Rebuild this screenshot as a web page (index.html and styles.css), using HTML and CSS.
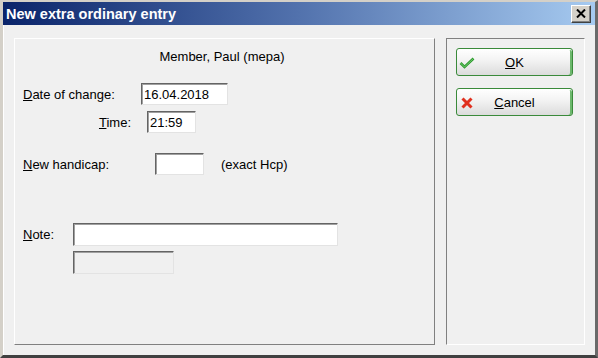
FILE: index.html
```html
<!DOCTYPE html>
<html lang="en">
<head>
    <meta charset="UTF-8">
    <title>New extra ordinary entry</title>
    <link rel="stylesheet" href="styles.css">
</head>
<body>
    <div class="window">
        <div class="titlebar">
            <span class="title">New extra ordinary entry</span>
            <button class="close-btn" aria-label="Close">
                <svg width="10" height="9" viewBox="0 0 10 9">
                    <path d="M1 0.5 L9 8.5 M9 0.5 L1 8.5" stroke="#000" stroke-width="2" fill="none"/>
                </svg>
            </button>
        </div>
        <div class="content">
            <div class="panel main-panel">
                <div class="member">Member, Paul (mepa)</div>

                <div class="row date-row">
                    <label class="lbl lbl-date"><u>D</u>ate of change:</label>
                    <input class="field field-date" type="text" value="16.04.2018">
                </div>
                <div class="row time-row">
                    <label class="lbl lbl-time"><u>T</u>ime:</label>
                    <input class="field field-time" type="text" value="21:59">
                </div>
                <div class="row hcp-row">
                    <label class="lbl lbl-hcp"><u>N</u>ew handicap:</label>
                    <input class="field field-hcp" type="text" value="">
                    <span class="hint">(exact Hcp)</span>
                </div>
                <div class="row note-row">
                    <label class="lbl lbl-note"><u>N</u>ote:</label>
                    <input class="field field-note" type="text" value="">
                </div>
                <div class="row extra-row">
                    <div class="field field-disabled"></div>
                </div>
            </div>
            <div class="panel side-panel">
                <button class="btn">
                    <svg class="btn-icon" width="16" height="12" viewBox="0 0 16 12">
                        <path d="M1.5 6 L5.5 10 L14.5 1.5" stroke="#2e9a2e" stroke-width="2.6" fill="none"/>
                        <path d="M1.5 6 L5.5 10 L14.5 1.5" stroke="#7fd37f" stroke-width="0.8" fill="none"/>
                    </svg>
                    <span class="btn-text"><u>O</u>K</span>
                </button>
                <button class="btn">
                    <svg class="btn-icon btn-icon-x" width="12" height="12" viewBox="0 0 12 12">
                        <path d="M1.5 1.5 L10.5 10.5 M10.5 1.5 L1.5 10.5" stroke="#e0301e" stroke-width="3" fill="none"/>
                    </svg>
                    <span class="btn-text"><u>C</u>ancel</span>
                </button>
            </div>
        </div>
    </div>
</body>
</html>
```

FILE: styles.css
```css
body {
    margin: 0;
    padding: 0;
    font-family: "Liberation Sans", Arial, sans-serif;
    font-size: 13px;
    color: #000;
    background: #f0f0f0;
}

.window {
    width: 598px;
    height: 358px;
    box-sizing: border-box;
    background: #f0f0f0;
    border-top: 2px solid #d4d0c8;
    border-left: 3px solid #d4d0c8;
    border-right: 3px solid #6a6a6a;
    border-bottom: 3px solid #404040;
    box-shadow: inset 1px 1px 0 #fff;
}

.titlebar {
    height: 23px;
    display: flex;
    align-items: center;
    justify-content: space-between;
    padding: 0 4px 0 3px;
    background: linear-gradient(to right, #0a246a, #5272ad 50%, #a6caf0);
}

.title {
    color: #fff;
    font-weight: bold;
    font-size: 14.5px;
    letter-spacing: 0;
}

.close-btn {
    width: 20px;
    height: 18px;
    padding: 0;
    display: flex;
    align-items: center;
    justify-content: center;
    background: #d4d0c8;
    border: 1px solid;
    border-color: #fff #404040 #404040 #fff;
    box-shadow: inset -1px -1px 0 #808080;
}

.content {
    display: flex;
    gap: 11px;
    padding: 13px 10px 0 11px;
}

.panel {
    height: 307px;
    box-sizing: border-box;
}

.main-panel {
    width: 421px;
    border: 1px solid;
    border-color: #fff #808080 #808080 #fff;
    padding: 10px 0 0 8px;
}

.side-panel {
    width: 139px;
    border: 1px solid;
    border-color: #808080 #fff #fff #808080;
    padding: 9px 0 0 9px;
    display: flex;
    flex-direction: column;
    gap: 12px;
}

.member {
    text-align: center;
    height: 16px;
    line-height: 16px;
    margin-right: 13px;
}

.row {
    display: flex;
    align-items: center;
}

.date-row { margin-top: 18px; }
.time-row { margin-top: 6px; }
.hcp-row { margin-top: 20px; }
.note-row { margin-top: 48px; }
.extra-row { margin-top: 5px; padding-left: 50px; }

.lbl u,
.btn-text u {
    text-decoration: underline;
    text-underline-offset: 1px;
}

.lbl-date { width: 118px; }
.lbl-time { width: 108px; text-align: right; margin-right: 16px; }
.lbl-hcp { width: 132px; }
.lbl-note { width: 50px; }

.field {
    box-sizing: border-box;
    height: 22px;
    margin: 0;
    padding: 0 2px;
    font-family: "Liberation Sans", Arial, sans-serif;
    font-size: 13px;
    color: #000;
    background: #fff;
    border: 1px solid;
    border-color: #646464 #e3e3e3 #e3e3e3 #646464;
    box-shadow: inset 1px 1px 0 #a0a0a0;
    outline: none;
}

.field-date { width: 87px; }
.field-time { width: 49px; }
.field-hcp { width: 49px; }
.field-note { width: 265px; height: 23px; }

.field-disabled {
    width: 101px;
    height: 23px;
    background: #f0f0f0;
}

.hint {
    margin-left: 17px;
}

.btn {
    position: relative;
    width: 117px;
    height: 28px;
    padding: 0;
    border: 1px solid #3a8a3a;
    border-radius: 3px;
    background: linear-gradient(to bottom, #ffffff 0%, #f4f4f4 40%, #dcdcdc 100%);
    box-shadow: inset 0 1px 0 #fff, inset -2px 0 0 #6cb86c;
    font-family: "Liberation Sans", Arial, sans-serif;
    font-size: 13px;
    color: #000;
    display: flex;
    align-items: center;
    justify-content: center;
}

.btn-icon {
    position: absolute;
    left: 2px;
    top: 8px;
}

.btn-icon-x {
    left: 4px;
}
```
